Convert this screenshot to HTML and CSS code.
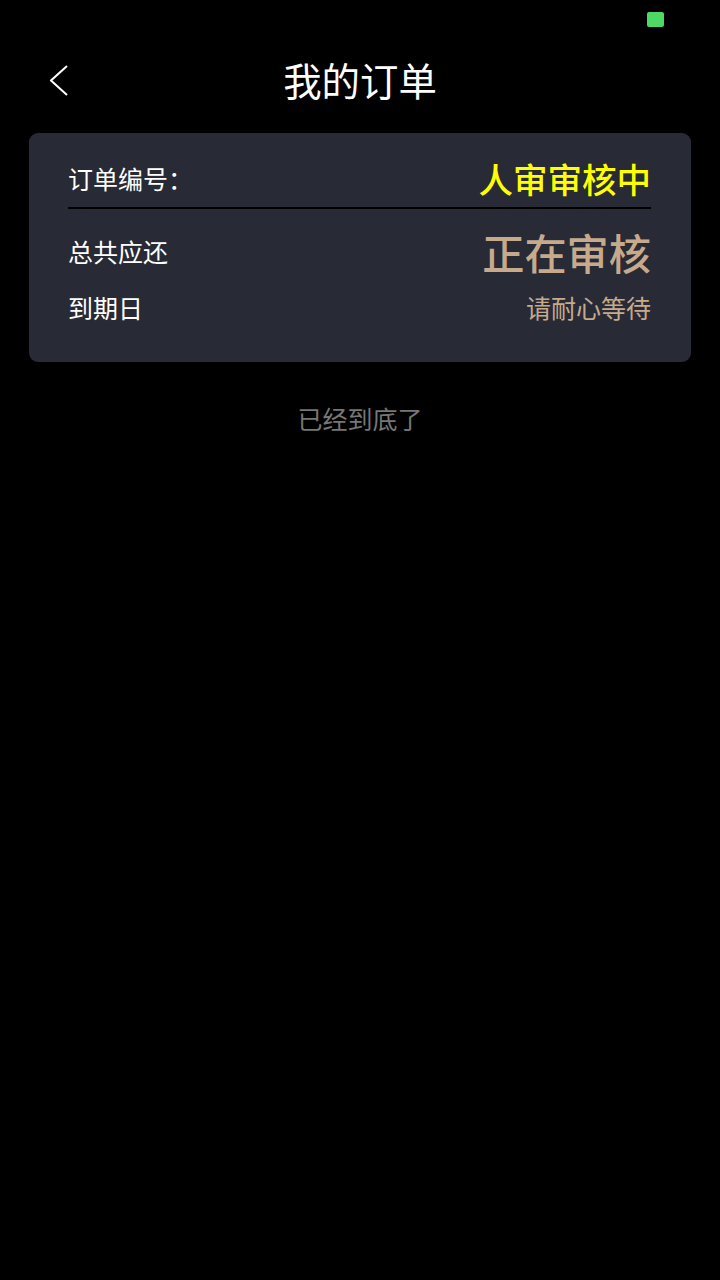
FILE: index.html
```html
<!DOCTYPE html>
<html lang="zh-CN">
<head>
  <meta charset="UTF-8" />
  <meta name="viewport" content="width=device-width, initial-scale=1.0" />
  <title>我的订单</title>
  <link rel="stylesheet" href="styles.css">
</head>
<body>

  <div class="status-bar">
    <span class="battery"></span>
  </div>

  <header class="top-bar">
    <button class="back" aria-label="返回">
      <svg width="20" height="33" viewBox="0 0 20 33">
        <polyline points="17,2 1,16.5 17,31" fill="none" stroke="#fff" stroke-width="2" />
      </svg>
    </button>
    <h1>我的订单</h1>
    <span></span>
  </header>

  <section class="orders">
    <div class="order-card">
      <div class="row row-head">
        <span class="label">订单编号：</span>
        <span class="status">人审审核中</span>
      </div>
      <div class="divider"></div>
      <div class="row row-amount">
        <span class="label">总共应还</span>
        <span class="amount">正在审核</span>
      </div>
      <div class="row row-date">
        <span class="label">到期日</span>
        <span class="note">请耐心等待</span>
      </div>
    </div>

    <p class="list-end">已经到底了</p>
  </section>

</body>
</html>
```

FILE: styles.css
```css
body {
  margin: 0;
  padding: 0;
  background: #000;
  color: #fff;
  font-family: "Noto Sans CJK SC", "Noto Sans", sans-serif;
}

.status-bar {
  height: 40px;
  display: flex;
  justify-content: flex-end;
  align-items: flex-start;
  padding-right: 56px;
}

.battery {
  width: 17px;
  height: 15px;
  margin-top: 12px;
  background: #4cd964;
  border-radius: 2px;
}

.top-bar {
  height: 80px;
  display: grid;
  grid-template-columns: 1fr auto 1fr;
  align-items: center;
}

.back {
  justify-self: start;
  margin-left: 50px;
  padding: 0;
  background: none;
  border: none;
  display: flex;
  cursor: pointer;
}

.top-bar h1 {
  margin: 0;
  font-size: 38.4px;
  font-weight: 400;
  line-height: 78px;
  padding-bottom: 2px;
}

.orders {
  padding: 13px 29px 0;
}

.order-card {
  background: #282a36;
  border-radius: 9px;
  padding: 20px 40px 35px 39px;
}

.row {
  display: flex;
  justify-content: space-between;
  align-items: center;
}

.label {
  font-size: 25px;
}

.row-head {
  height: 50px;
  padding-bottom: 4px;
}

.status {
  color: #ffff00;
  font-size: 34.5px;
  font-weight: 500;
}

.divider {
  height: 2px;
  background: #000;
}

.row-amount {
  height: 56px;
  margin-top: 14px;
}

.amount {
  color: #c6aa8b;
  font-size: 42.2px;
  font-weight: 500;
}

.row-date {
  height: 40px;
  margin-top: 8px;
}

.note {
  color: #c6aa8b;
  font-size: 25px;
}

.list-end {
  margin: 38px 0 0;
  text-align: center;
  color: #777;
  font-size: 25px;
  line-height: 36px;
}
```
